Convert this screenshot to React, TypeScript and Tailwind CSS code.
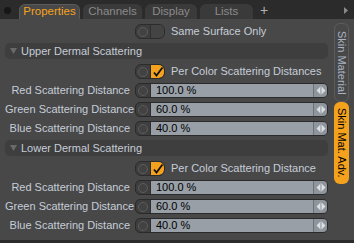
import React from "react";

const FONT = { fontFamily: '"Liberation Sans", Arial, sans-serif' };

const Circle = () => (
  <span className="block h-[10px] w-[10px] rounded-full border border-[#5c5c5c] bg-[#424242]" />
);

const Toggle = ({ checked }: { checked?: boolean }) => (
  <div className="flex h-[15px] w-[30px] overflow-hidden rounded-[6px] border border-[#2c2c2c] bg-[#3e3e3e]">
    <div className="flex w-[14px] items-center justify-center">
      <Circle />
    </div>
    {checked ? (
      <div className="flex flex-1 items-center justify-center rounded-r-[5px] border-l border-[#2c2c2c] bg-[#f4a21e]">
        <svg width="12" height="11" viewBox="0 0 12 11">
          <path d="M2 6.5 L4.5 9.5 L10.5 1.5" fill="none" stroke="#111" strokeWidth="1.8" />
        </svg>
      </div>
    ) : (
      <div className="flex-1 border-l border-[#2f2f2f] bg-[#444]" />
    )}
  </div>
);

const Arrows = () => (
  <div className="flex w-[14px] items-center justify-center border-l border-[#6c7278] bg-[#8f959c]">
    <svg width="12" height="11" viewBox="0 0 12 11">
      <polygon points="1.5,5.5 5,2 5,9" fill="#dde0e3" />
      <rect x="5.6" y="1.5" width="0.9" height="8" fill="#dde0e3" />
      <polygon points="7,2 7,9 10.5,5.5" fill="#dde0e3" />
    </svg>
  </div>
);

const FieldRow = ({ label, value }: { label: string; value: string }) => (
  <div className="mt-[4px] flex h-[15px] items-center">
    <span className="w-[125px] shrink-0 whitespace-nowrap text-right text-[11px] leading-none text-[#c6cdd8]">
      {label}
    </span>
    <div className="ml-[5px] flex h-[15px] w-[193px] shrink-0 overflow-hidden rounded-[5px] border border-[#2a2a2a] bg-[#3e3e3e]">
      <div className="flex w-[14px] items-center justify-center">
        <Circle />
      </div>
      <div className="flex flex-1 items-center border-l border-[#2f2f2f] bg-[#989fa7] pl-[5px] text-[11px] leading-none text-black">
        {value}
      </div>
      <Arrows />
    </div>
  </div>
);

const CheckRow = ({ label, checked }: { label: string; checked?: boolean }) => (
  <div className="flex h-[15px] items-center">
    <div className="ml-[130px]">
      <Toggle checked={checked} />
    </div>
    <span className="ml-[6px] whitespace-nowrap text-[11px] leading-none text-[#c6cdd8]">{label}</span>
  </div>
);

const Header = ({ title }: { title: string }) => (
  <div className="flex h-[16px] w-[323px] items-center rounded-[5px] bg-[#3e3e3e]">
    <svg className="ml-[5px]" width="7" height="6" viewBox="0 0 7 6">
      <polygon points="0,0 7,0 3.5,6" fill="#6a6a6a" />
    </svg>
    <span className="ml-[4px] text-[11px] leading-none text-[#c6cdd8]">{title}</span>
  </div>
);

const Tab = ({ label, active, w }: { label: string; active?: boolean; w: string }) => (
  <div
    className={`flex h-[15px] items-center justify-center rounded-t-[6px] text-[11.5px] leading-none ${w} ${
      active ? "border-x border-t border-[#5a5a5a] bg-[#484848] text-[#f5a31f]" : "bg-[#3a3a3a] text-[#8a8a8a]"
    }`}
  >
    {label}
  </div>
);

export default function App() {
  return (
    <div className="flex h-[243px] w-[354px] flex-col bg-[#2b2b2b]" style={FONT}>
      <div className="flex h-[19px] items-end">
        <div className="ml-[4px] mb-[5px] h-[7px] w-[7px] rounded-full bg-[#161616]" />
        <div className="ml-[8px] flex gap-[3px]">
          <Tab label="Properties" active w="w-[61px]" />
          <Tab label="Channels" w="w-[59px]" />
          <Tab label="Display" w="w-[52px]" />
          <Tab label="Lists" w="w-[53px]" />
        </div>
        <span className="mb-[2px] ml-[7px] text-[14px] leading-none text-[#b0b0b0]">+</span>
        <svg className="mb-[5px] ml-auto mr-[6px]" width="4" height="7" viewBox="0 0 4 7">
          <polygon points="0,0 4,3.5 0,7" fill="#8a8a8a" />
        </svg>
      </div>

      <div className="flex h-[221px] bg-[#484848]">
        <div className="flex w-[333px] flex-col pl-[5px] pt-[5px]">
          <div className="flex h-[15px] items-center">
            <div className="ml-[130px]">
              <Toggle />
            </div>
            <span className="ml-[6px] text-[11px] leading-none text-[#c6cdd8]">Same Surface Only</span>
          </div>
          <div className="mt-[4px]">
            <Header title="Upper Dermal Scattering" />
          </div>
          <div className="mt-[5px]">
            <CheckRow label="Per Color Scattering Distances" checked />
          </div>
          <FieldRow label="Red Scattering Distance" value="100.0 %" />
          <FieldRow label="Green Scattering Distance" value="60.0 %" />
          <FieldRow label="Blue Scattering Distance" value="40.0 %" />
          <div className="mt-[4px]">
            <Header title="Lower Dermal Scattering" />
          </div>
          <div className="mt-[5px]">
            <CheckRow label="Per Color Scattering Distance" checked />
          </div>
          <FieldRow label="Red Scattering Distance" value="100.0 %" />
          <FieldRow label="Green Scattering Distance" value="60.0 %" />
          <FieldRow label="Blue Scattering Distance" value="40.0 %" />
        </div>

        <div className="flex flex-col pl-[1px] pt-[4px]">
          <div
            className="flex h-[79px] w-[15px] items-center justify-center rounded-[6px] border border-[#5c5c5c] bg-[#484848] text-[11px] leading-none text-[#a9b3c4]"
            style={{ writingMode: "vertical-rl" }}
          >
            Skin Material
          </div>
          <div
            className="flex h-[82px] w-[15px] items-center justify-center rounded-[6px] bg-[#f4a21e] text-[11px] leading-none text-black"
            style={{ writingMode: "vertical-rl" }}
          >
            Skin Mat. Adv.
          </div>
        </div>
      </div>
      <div className="h-[3px]" />
    </div>
  );
}
